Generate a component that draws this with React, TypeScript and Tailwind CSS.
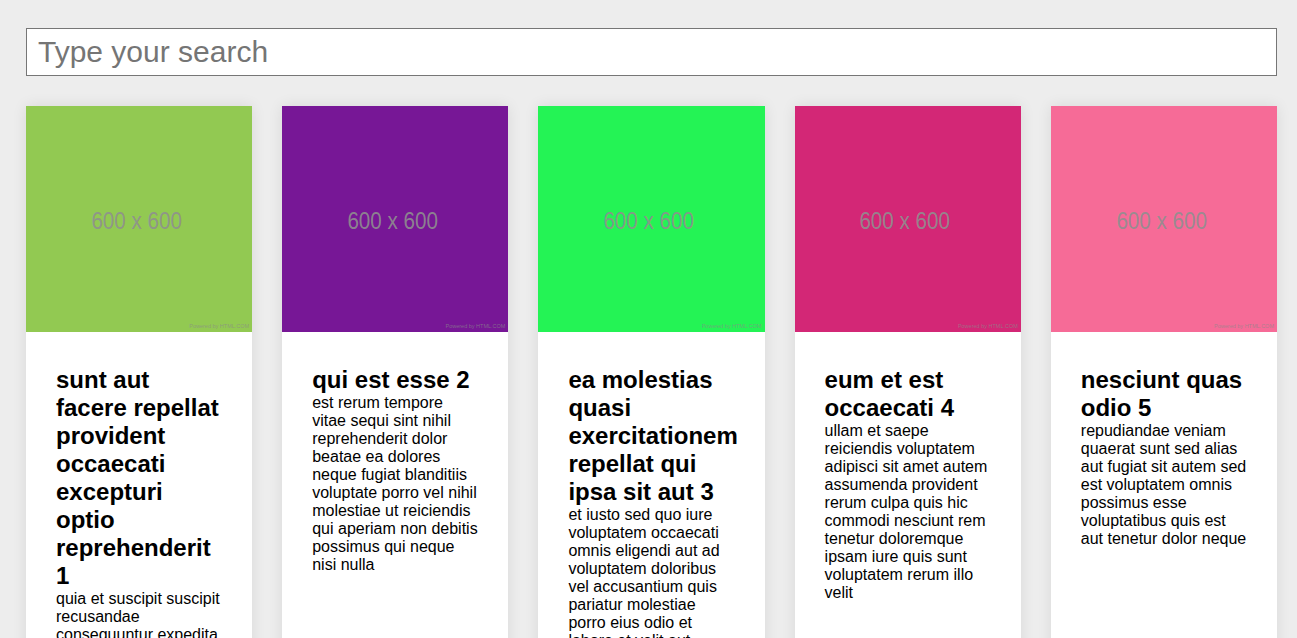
import React from "react";

const posts = [
  {
    color: "bg-[#92c952]",
    title: "sunt aut facere repellat provident occaecati excepturi optio reprehenderit 1",
    body: "quia et suscipit suscipit recusandae consequuntur expedita et cum reprehenderit molestiae ut ut quas totam nostrum rerum est autem sunt rem eveniet architecto",
  },
  {
    color: "bg-[#771796]",
    title: "qui est esse 2",
    body: "est rerum tempore vitae sequi sint nihil reprehenderit dolor beatae ea dolores neque fugiat blanditiis voluptate porro vel nihil molestiae ut reiciendis qui aperiam non debitis possimus qui neque nisi nulla",
  },
  {
    color: "bg-[#24f355]",
    title: "ea molestias quasi exercitationem repellat qui ipsa sit aut 3",
    body: "et iusto sed quo iure voluptatem occaecati omnis eligendi aut ad voluptatem doloribus vel accusantium quis pariatur molestiae porro eius odio et labore et velit aut",
  },
  {
    color: "bg-[#d32776]",
    title: "eum et est occaecati 4",
    body: "ullam et saepe reiciendis voluptatem adipisci sit amet autem assumenda provident rerum culpa quis hic commodi nesciunt rem tenetur doloremque ipsam iure quis sunt voluptatem rerum illo velit",
  },
  {
    color: "bg-[#f66b97]",
    title: "nesciunt quas odio 5",
    body: "repudiandae veniam quaerat sunt sed alias aut fugiat sit autem sed est voluptatem omnis possimus esse voluptatibus quis est aut tenetur dolor neque",
  },
];

export default function App() {
  return (
    <div
      className="h-screen overflow-auto bg-[#ededed] pl-[26px] pr-[20px] pt-[28px] pb-[26px] text-black [scrollbar-width:none]"
      style={{ fontFamily: '"Liberation Sans", Arial, sans-serif' }}
    >
      <input
        type="text"
        placeholder="Type your search"
        className="block h-[48px] w-full border border-[#767676] bg-white px-[11px] text-[30px] text-black placeholder:text-[#757575] outline-none"
        style={{ fontFamily: '"Liberation Sans", Arial, sans-serif' }}
      />
      <div className="mt-[30px] grid grid-cols-5 gap-[30px]">
        {posts.map((p, i) => (
          <div key={i} className="bg-white shadow-[0_0_14px_rgba(0,0,0,0.09)]">
            <div className={`relative flex aspect-square w-full items-center justify-center ${p.color}`}>
              <span className="mr-[5px] mt-[3px] scale-x-[0.86] text-[24px] leading-none text-[#8f8f8f]/90">600 x 600</span>
              <span className="absolute bottom-[3px] right-[3px] text-[5.5px] leading-none text-[#8a8a8a]/70">
                Powered by HTML.COM
              </span>
            </div>
            <div className="px-[30px] pt-[34px] pb-[30px]">
              <h2 className="text-[24px] font-bold leading-[normal]">{p.title}</h2>
              <p className="text-[16px] leading-[normal]">{p.body}</p>
            </div>
          </div>
        ))}
      </div>
    </div>
  );
}
